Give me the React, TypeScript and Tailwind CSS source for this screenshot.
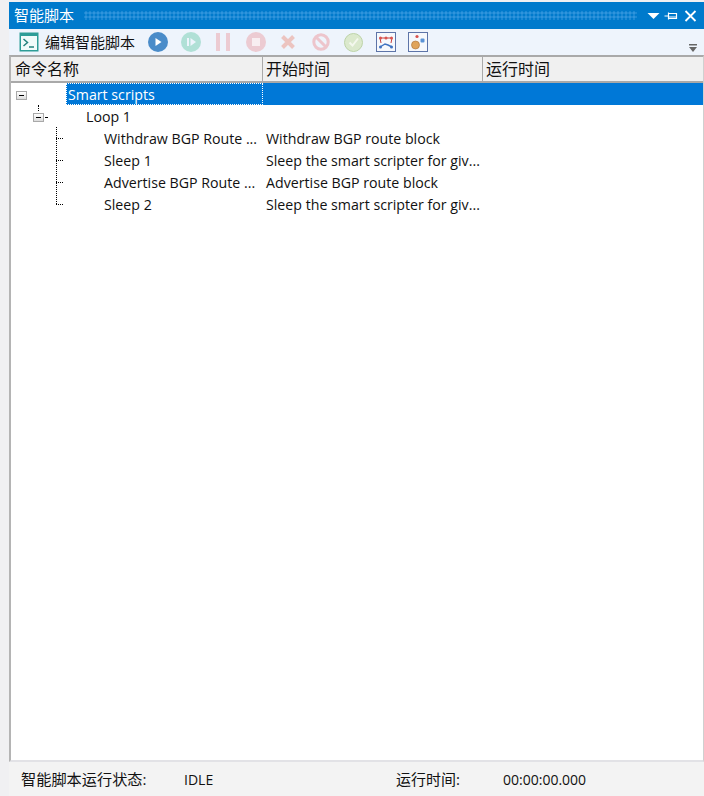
import React from "react";

const F = "[font-family:'Open_Sans','Noto_Sans_CJK_SC',sans-serif]";

function Toolbtn({ children }: { children: React.ReactNode }) {
  return <div className="flex h-[24px] w-[22px] items-center justify-center">{children}</div>;
}

function Minus() {
  return (
    <div className="flex h-[9px] w-[11px] items-center justify-center border border-[#a9a9a9] bg-[linear-gradient(#ffffff,#dcdcdc)]">
      <div className="h-px w-[5px] bg-black" />
    </div>
  );
}

function Row({ name, desc, indent }: { name: string; desc?: string; indent: number }) {
  return (
    <div className="flex h-[22px] items-center whitespace-nowrap pt-[2px] text-[14.2px] leading-[20px] text-[#111]">
      <div className="w-[252px] shrink-0" style={{ paddingLeft: indent }}>{name}</div>
      <div className="shrink-0 pl-[3px]">{desc}</div>
    </div>
  );
}

export default function App() {
  return (
    <div className={"flex h-[796px] w-[704px] flex-col overflow-hidden bg-[#f0f0f2] pl-[9px] pt-[2px] " + F}>
      <div className="flex h-[27px] shrink-0 items-center bg-[#007acc] pl-[5px] pr-[7px] text-[15px] text-white">
        <span className="shrink-0">智能脚本</span>
        <div className="ml-[10px] mr-[10px] h-[9px] flex-1 bg-[radial-gradient(#2f94dc_1.5px,transparent_1.7px)] bg-[length:4px_4px]" />
        <div className="flex items-center gap-[4px]">
          <svg width="13" height="12" viewBox="0 0 13 12"><path d="M0.5 3h12L6.5 9z" fill="#fff" /></svg>
          <svg width="14" height="12" viewBox="0 0 14 12" fill="none" stroke="#fff"><path d="M0.5 6H4M4.5 2.5v7M4.5 3.5h8v5h-8M4.5 7h8" strokeWidth="1.2" /></svg>
          <svg width="13" height="12" viewBox="0 0 13 12" className="ml-[2px]" fill="none" stroke="#fff" strokeWidth="1.8"><path d="M1.5 1L11.5 11M11.5 1L1.5 11" /></svg>
        </div>
      </div>
      <div className="relative flex h-[26px] shrink-0 items-center bg-[#eef4fc] pl-[10px] text-[15px] text-[#111]">
        <svg width="20" height="20" viewBox="0 0 20 20" className="shrink-0">
          <rect x="0.5" y="0.5" width="19" height="19" fill="#2e9d97" />
          <rect x="2" y="4" width="16" height="14" fill="#f1fbfa" />
          <path d="M4.5 7l4 3.5-4 3.5" fill="none" stroke="#23827d" strokeWidth="1.5" />
          <path d="M10 15h5" stroke="#23827d" strokeWidth="1.5" />
        </svg>
        <span className="ml-[6px] w-[97px] shrink-0">编辑智能脚本</span>
        <div className="ml-[5px] flex items-center gap-[10.5px]">
          <Toolbtn><svg width="20" height="20" viewBox="0 0 20 20"><circle cx="10" cy="10" r="10" fill="#4a8cc9" /><path d="M7.5 6l6 4-6 4z" fill="#fff" /></svg></Toolbtn>
          <Toolbtn><svg width="20" height="20" viewBox="0 0 20 20"><circle cx="10" cy="10" r="10" fill="#b0e0d6" /><path d="M6 6h2v8H6zM9.5 6l5.5 4-5.5 4z" fill="#eef4fc" /></svg></Toolbtn>
          <Toolbtn><svg width="14" height="18" viewBox="0 0 14 18"><path d="M0 0h4v18H0zM10 0h4v18h-4z" fill="#eccbd2" /></svg></Toolbtn>
          <Toolbtn><svg width="20" height="20" viewBox="0 0 20 20"><circle cx="10" cy="10" r="10" fill="#eccbd2" /><rect x="6" y="6" width="8" height="8" fill="#f8eef1" /></svg></Toolbtn>
          <Toolbtn><svg width="16" height="16" viewBox="0 0 16 16"><path d="M2.5 2.5l11 11M13.5 2.5l-11 11" stroke="#ecc4c0" strokeWidth="4" /></svg></Toolbtn>
          <Toolbtn><svg width="18" height="18" viewBox="0 0 18 18" fill="none" stroke="#edc5cc" strokeWidth="3"><circle cx="9" cy="9" r="7.2" /><path d="M4 4l10 10" /></svg></Toolbtn>
          <Toolbtn><svg width="19" height="19" viewBox="0 0 19 19"><circle cx="9.5" cy="9.5" r="9" fill="#dbe9cd" stroke="#bdd3a8" /><path d="M5.5 9.5l3 3 5.5-7" fill="none" stroke="#f4f8ee" strokeWidth="2" /></svg></Toolbtn>
          <Toolbtn><svg width="20" height="20" viewBox="0 0 20 20"><rect x="0.5" y="0.5" width="19" height="19" fill="#f6f8fc" stroke="#5d74a8" /><path d="M4 6h12M4 6l1 5M16 6l-1 5" fill="none" stroke="#c8403c" strokeWidth="1" /><path d="M4 15l5-3 3 1 4 2" fill="none" stroke="#3f72c0" strokeWidth="1.4" /><circle cx="4.5" cy="6" r="1.5" fill="#d9534f" /><circle cx="10" cy="6" r="1.5" fill="#d9534f" /><circle cx="15.5" cy="6" r="1.5" fill="#d9534f" /><circle cx="4.5" cy="15" r="1.5" fill="#3f72c0" /><circle cx="15.5" cy="15" r="1.5" fill="#3f72c0" /></svg></Toolbtn>
          <Toolbtn><svg width="20" height="20" viewBox="0 0 20 20"><rect x="0.5" y="0.5" width="19" height="19" fill="#f6f8fc" stroke="#5d74a8" /><circle cx="7.5" cy="13" r="4" fill="#e0a45c" stroke="#a8703a" strokeWidth=".6" /><rect x="12.5" y="6.5" width="4" height="4" rx="1" fill="#5b93d6" /><circle cx="9" cy="4.5" r="1.6" fill="#d9534f" /></svg></Toolbtn>
        </div>
        <svg width="8" height="8" viewBox="0 0 8 8" className="absolute right-[7px] bottom-[3px]"><path d="M0 0h8v1.5H0z" fill="#666" /><path d="M0 3h8L4 8z" fill="#666" /></svg>
      </div>
      <div className="flex min-h-0 flex-1 flex-col border-b-2 border-l-2 border-r border-t-2 border-b-[#e2e2e6] border-l-[#b4b4b4] border-r-[#d0d0d0] border-t-[#a9a9a9] bg-white">
        <div className="flex h-[26px] shrink-0 border-b-2 border-[#a9a9a9] bg-[#f0f0f0] text-[16px] leading-[25px] text-[#111]">
          <div className="w-[252px] shrink-0 border-r border-[#a9a9a9] pl-[4px]">命令名称</div>
          <div className="w-[220px] shrink-0 border-r border-[#a9a9a9] pl-[3px]">开始时间</div>
          <div className="flex-1 pl-[3px]">运行时间</div>
        </div>
        <div className="relative min-h-0 flex-1">
          <div className="flex h-[22px]">
            <div className="w-[55px] shrink-0" />
            <div className="flex flex-1 bg-[#0078d7] text-[14.2px] text-white">
              <div className="flex h-[22px] w-[197px] items-center whitespace-nowrap border border-dotted border-white pl-[1px] pt-[1px]">Smart scripts</div>
            </div>
          </div>
          <Row name="Loop 1" indent={75} />
          <Row name="Withdraw BGP Route ..." desc="Withdraw BGP route block" indent={93} />
          <Row name="Sleep 1" desc="Sleep the smart scripter for giv..." indent={93} />
          <Row name="Advertise BGP Route ..." desc="Advertise BGP route block" indent={93} />
          <Row name="Sleep 2" desc="Sleep the smart scripter for giv..." indent={93} />
          <div className="absolute left-[5px] top-[8px]"><Minus /></div>
          <div className="absolute left-[22px] top-[30px]"><Minus /></div>
          <div className="absolute left-[27px] top-[22px] h-[6px] border-l border-dotted border-black" />
          <div className="absolute left-[34px] top-[34px] w-[2px] border-t border-dotted border-black" />
          <div className="absolute left-[45px] top-[44px] h-[77px] border-l border-dotted border-black" />
          <div className="absolute left-[45px] top-[55px] w-[7px] border-t border-dotted border-black" />
          <div className="absolute left-[45px] top-[77px] w-[7px] border-t border-dotted border-black" />
          <div className="absolute left-[45px] top-[99px] w-[7px] border-t border-dotted border-black" />
          <div className="absolute left-[45px] top-[121px] w-[7px] border-t border-dotted border-black" />
        </div>
      </div>
      <div className="flex h-[34px] shrink-0 items-center bg-[#f3f3f3] text-[14px] text-[#111]">
        <span className="ml-[12px] w-[163px] shrink-0 text-[15.2px]">智能脚本运行状态:</span>
        <span className="w-[212px] shrink-0">IDLE</span>
        <span className="w-[107px] shrink-0 text-[15px]">运行时间:</span>
        <span>00:00:00.000</span>
      </div>
    </div>
  );
}
